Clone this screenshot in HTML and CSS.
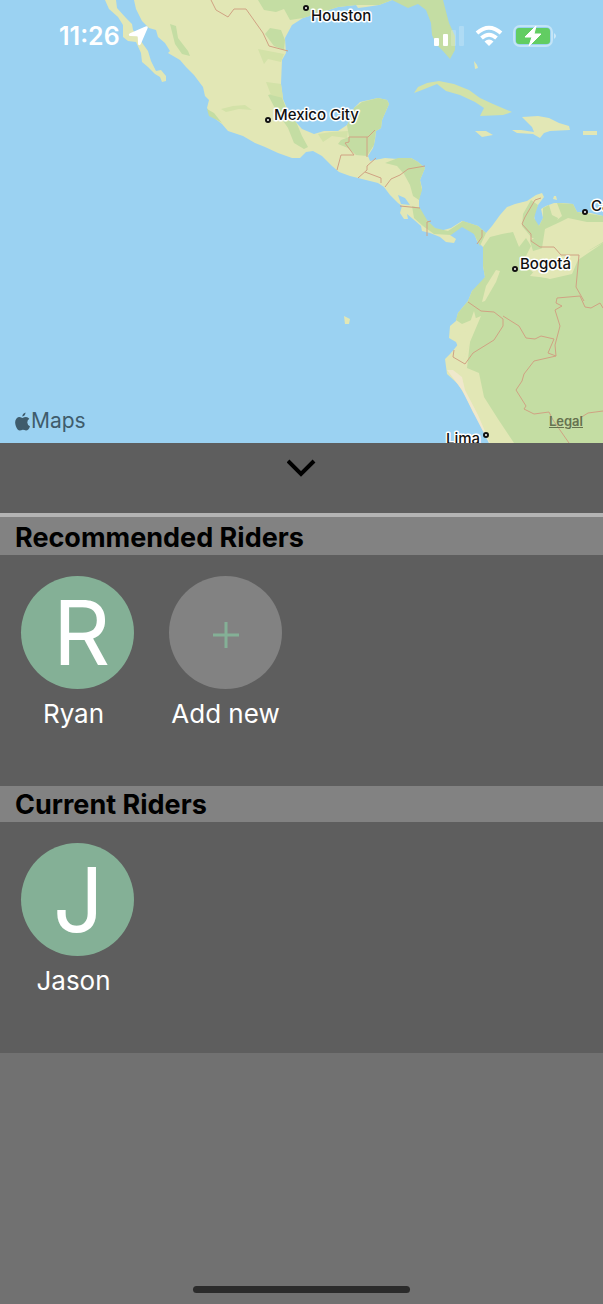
FILE: index.html
```html
<!DOCTYPE html>
<html lang="en">

<head>
    <meta charset="UTF-8">
    <meta name="viewport" content="width=device-width, initial-scale=1.0">
    <title>Riders</title>
    <link rel="stylesheet" href="styles.css">
</head>

<body>
    <section class="map">
        <svg class="map-canvas" viewBox="0 0 603 443" role="img" aria-label="Map of Central America">
            <rect class="sea" width="603" height="443"/>

            <!-- Baja California -->
            <path class="dry" d="M105 0 L109 9 L118 17 L123 25 L123 37 L128 41 L136 42 L141 53 L142 62 L148 67 L155 74 L160 77 L162 82 L166 81 L166 76 L161 70 L156 71 L151 61 L148 51 L138 37 L133 30 L132 24 L126 18 L117 8 L116 0 Z"/>

            <!-- Mainland -->
            <path class="dry" d="M134 0 L136 9 L142 21 L149 28 L156 30 L158 37 L165 43 L170 51 L168 53 L180 60 L186 67 L194 75 L203 87 L205 96 L209 100 L207 108 L213 117 L222 124 L228 131 L243 136 L255 143 L265 147 L278 153 L292 158 L300 158 L306 152 L313 151 L322 156 L332 166 L339 172 L350 176 L358 178 L370 181 L378 183 L384 187 L390 195 L398 203 L402 206 L400 213 L404 219 L408 219 L407 214 L413 219 L421 226 L422 231 L430 233 L440 237 L446 242 L454 243 L456 239 L450 235 L455 229 L461 226 L468 227 L474 233 L477 241 L483 247 L483 266 L485 277 L480 285 L472 291 L468 301 L458 313 L456 321 L450 326 L449 338 L456 342 L458 347 L451 353 L445 359 L447 374 L458 384 L466 397 L473 412 L482 426 L489 443 L603 443 L603 216 L591 213 L577 212 L573 204 L563 203 L554 203 L546 206 L541 209 L543 218 L539 226 L535 223 L534 214 L538 205 L544 197 L542 193 L536 195 L527 201 L515 204 L507 207 L500 215 L492 226 L486 233 L478 226 L462 221 L451 228 L440 231 L431 226 L424 217 L419 208 L419 199 L422 188 L420 180 L425 168 L418 162 L411 158 L398 159 L385 158 L370 161 L368 156 L373 148 L375 140 L376 131 L381 128 L382 120 L389 104 L387 100 L378 98 L360 102 L354 108 L351 118 L347 125 L338 131 L324 131 L314 134 L302 129 L295 121 L288 111 L283 99 L281 84 L282 60 L286 53 L285 38 L292 25 L303 18 L316 14 L338 7 L356 5 L358 8 L366 7 L379 5 L392 0 Z"/>
            <path class="green" d="M354 108 L362 102 L378 98 L387 100 L389 104 L382 120 L381 128 L376 131 L374 145 L367 156 L356 155 L348 148 L338 144 L341 140 L349 137 L347 125 L351 118 Z"/>
            <path class="green" d="M258 0 L264 10 L276 12 L284 9 L290 20 L303 18 L316 14 L338 7 L356 5 L379 5 L392 0 Z"/>
            <path class="green" d="M270 28 L281 30 L285 40 L284 50 L274 46 L265 34 Z"/>
            <path class="soft-green" d="M258 49 L284 54 L281 62 L268 59 L264 64 Z"/>
            <path class="green" d="M268 95 L280 92 L286 108 L297 124 L302 136 L308 147 L304 149 L294 143 L288 128 L277 112 Z"/>
            <path class="soft-green" d="M266 82 L281 84 L283 98 L271 95 Z"/>
            <path class="green" d="M170 24 L176 26 L178 38 L188 51 L190 56 L182 54 L175 44 Z"/>
            <path class="green" d="M207 109 L214 113 L222 123 L217 120 L209 116 Z"/>
            <path class="soft-green" d="M221 109 L233 106 L245 105 L252 110 L239 109 L226 112 Z"/>
            <path class="soft-green" d="M318 134 L331 132 L348 131 L347 138 L332 136 L323 142 Z"/>
            <path class="green" d="M385 163 L398 158 L411 158 L418 162 L425 168 L420 180 L422 190 L419 200 L413 196 L410 185 L404 174 L397 166 Z"/>
            <path class="green" d="M412 206 L420 208 L427 220 L435 228 L448 231 L463 221 L478 226 L486 233 L480 246 L474 234 L462 227 L451 235 L434 234 L423 226 L414 218 Z"/>

            <!-- South America forests -->
            <path class="green" d="M483 247 L490 237 L502 234 L513 232 L519 247 L526 238 L531 246 L522 264 L538 276 L550 279 L572 274 L578 260 L603 243 L603 443 L514 443 L498 419 L484 397 L479 373 L467 368 L470 342 L481 316 L462 324 L456 320 L458 313 L468 301 L472 291 L485 277 L483 266 Z"/>
            <path class="green" d="M538 205 L531 200 L523 214 L522 226 L532 238 L543 238 L555 229 L558 218 L552 215 L549 205 L543 208 L543 218 L539 226 L534 218 Z"/>
            <path class="green" d="M557 203 L573 204 L577 212 L603 216 L603 243 L590 250 L573 254 L553 245 L533 251 L530 241 L544 231 L562 216 Z"/>
            <path class="dry" d="M545 229 L560 222 L568 218 L587 222 L603 222 L603 242 L588 251 L577 256 L572 273 L548 278 L530 276 L540 264 L542 248 Z"/>
            <path class="dry" d="M496 270 L500 271 L496 282 L485 301 L482 302 L486 286 Z"/>
            <path class="dry" d="M474 311 L476 319 L472 330 L469 345 L463 360 L451 353 L460 342 L458 335 L467 331 Z"/>
            <path class="sand" d="M447 370 L453 370 L462 377 L465 390 L478 415 L490 443 L489 443 L473 412 L462 390 Z"/>

            <!-- Islands -->
            <path class="green" d="M392 0 L400 4 L408 8 L418 4 L426 10 L431 23 L432 35 L436 44 L443 51 L450 59 L455 50 L455 36 L449 23 L443 0 Z"/>
            <path class="soft-green" d="M414 93 L418 87 L427 83 L439 81 L454 84 L469 90 L480 98 L493 104 L512 112 L503 115 L480 116 L484 108 L475 102 L460 95 L446 91 L437 84 L422 90 Z"/>
            <path class="dry" d="M475 131 L486 131 L493 135 L482 137 Z M512 130 L521 130 L534 132 L532 127 L522 117 L538 116 L549 118 L559 123 L569 126 L570 130 L550 131 L544 133 L540 138 L533 134 L517 133 Z M583 131 H597 V135 H583 Z M474 61 L477 65 L478 68 L475 69 Z M554 196 L556 196 L557 200 L553 199 Z M344 316 L350 319 L349 324 L345 324 Z"/>
            <path class="sea" d="M398 195 L405 198 L410 205 L401 204 Z"/>

            <!-- Borders -->
            <path class="border" d="M211 0 L216 10 L228 17 L234 9 L246 9 L263 33 L269 46 L288 51
                M337 170 L341 155 L354 155 L345 143 L349 142 V137 H368 L375 130 M367 137 V157
                M376 158 L367 166 V170 L358 178 M365 172 L381 178 V183
                M385 187 L391 179 L400 175 L408 169 L425 166
                M400 206 L420 208 M427 236 V222 L431 221
                M482 230 V237 L477 244
                M541 198 L535 200 L525 217 L522 224 L531 234 V241 L540 247 L554 247 L561 255 L579 255 L576 287 L584 301
                M468 302 L481 311 L494 312 L503 319 L503 326 L494 340 L473 353 L465 364 L453 357 L454 350
                M503 316 L519 326 L526 338 L535 339 L541 336 L554 339 L548 353 L556 356 L555 345 L560 326 L555 310 L562 306 L556 303 L557 298 L580 296 L585 307 L591 308 L600 303 L603 308
                M556 356 L534 361 L524 374 L522 381 L516 390 L526 406 L524 409 L534 414 L549 412 L553 420 L569 443 M580 418 L588 413 L603 411"/>

            <!-- Cities -->
            <g class="pin">
                <circle cx="306" cy="8" r="2"/>
                <circle cx="268" cy="120" r="2"/>
                <circle cx="585" cy="212" r="2"/>
                <circle cx="515" cy="269" r="2"/>
                <circle cx="486" cy="435" r="2"/>
            </g>
            <g class="city">
                <text x="311" y="21">Houston</text>
                <text x="274" y="120">Mexico City</text>
                <text x="591" y="211">Caracas</text>
                <text x="520" y="269">Bogotá</text>
                <text x="446" y="444">Lima</text>
            </g>
        </svg>

        <div class="status-bar">
            <div class="clock">
                <span>11:26</span>
                <svg width="20" height="20" viewBox="0 0 20 20" aria-hidden="true">
                    <path d="M17.500 0.500 Q20.500 -0.500 19.500 2.500 L12.800 18 Q11 20.500 10 18 L9.800 11.500 Q9.800 10.200 8.500 10.200 L2 10 Q-0.500 9 2 7.200 Z" fill="#fff"/>
                </svg>
            </div>
            <div class="indicators">
                <svg width="32" height="22" viewBox="0 0 32 22" aria-hidden="true">
                    <g fill="#fff">
                        <rect x="1" y="13" width="5" height="8" rx="1"/>
                        <rect x="10" y="9" width="5" height="12" rx="1"/>
                        <rect x="18" y="5" width="5" height="16" rx="1" opacity=".2"/>
                        <rect x="26" y="1" width="5" height="20" rx="1" opacity=".2"/>
                    </g>
                </svg>
                <svg width="28" height="22" viewBox="0 0 28 22" aria-hidden="true">
                    <g fill="none" stroke="#fff" stroke-width="4">
                        <path d="M2 8 Q14 -2.500 26 8"/>
                        <path d="M6.500 13 Q14 6.500 21.500 13"/>
                    </g>
                    <path d="M9.500 16.500 Q14 12.500 18.500 16.500 L14 21 Z" fill="#fff"/>
                </svg>
                <svg width="44" height="22" viewBox="0 0 44 22" aria-hidden="true">
                    <rect x="1" y="1" width="38" height="20" rx="6" fill="none" stroke="#fff" stroke-width="2" opacity=".4"/>
                    <path d="M41 8 Q45 11 41 14 Z" fill="#fff" opacity=".5"/>
                    <rect x="3" y="3" width="34" height="16" rx="3" fill="#62cd62"/>
                    <path d="M23 1 L12 12 L19 12 L16 21 L28 9 L21 9 Z" fill="#fff" stroke="#fff"/>
                </svg>
            </div>
        </div>

        <div class="map-footer">
            <span class="brand">
                <svg width="15" height="19" viewBox="0 0 15 19" aria-hidden="true">
                    <path d="M10.500 0.500 Q10.500 4 7.300 4.500 Q7.300 1.500 10.500 0.500 Z M7.500 6 Q9 5 11 5 Q13 5 14.300 6.800 Q12.300 8 12.300 10.500 Q12.300 13 15 14.200 Q13.500 18.500 11 18.500 Q9.500 17.800 7.800 17.800 Q6 18.500 4.800 18.500 Q2.500 18.500 0.800 14 Q-0.800 9 1.500 6.500 Q3.500 4.500 5.500 5.300 Z" fill="#3f5c6c"/>
                </svg>
                Maps
            </span>
            <a class="legal" href="#legal">Legal</a>
        </div>
    </section>

    <main class="sheet">
        <button class="collapse" type="button" aria-label="Collapse">
            <svg width="30" height="18" viewBox="0 0 30 18" aria-hidden="true">
                <path d="M1 2 L14 15 L27 2" fill="none" stroke="#000" stroke-width="4"/>
            </svg>
        </button>

        <section class="group">
            <h2 class="first">Recommended Riders</h2>
            <div class="riders">
                <button class="rider" type="button">
                    <span class="avatar">R</span>
                    <span class="name">Ryan</span>
                </button>
                <button class="rider add" type="button">
                    <span class="avatar">
                        <svg width="26" height="26" viewBox="0 0 26 26" aria-hidden="true">
                            <path d="M13 0 V26 M0 13 H26" stroke="#84b096" stroke-width="3"/>
                        </svg>
                    </span>
                    <span class="name">Add new</span>
                </button>
            </div>
        </section>

        <section class="group">
            <h2>Current Riders</h2>
            <div class="riders">
                <button class="rider" type="button">
                    <span class="avatar">J</span>
                    <span class="name">Jason</span>
                </button>
            </div>
        </section>
    </main>

    <footer class="home">
        <div class="home-bar"></div>
    </footer>
</body>
</html>
```
FILE: styles.css
```css
* {
    box-sizing: border-box;
}

body {
    font-family: Inter, "Liberation Sans", sans-serif;
    margin: 0;
    min-height: 100vh;
    display: flex;
    flex-direction: column;
    background-color: #717171;
    color: white;
}

.map {
    position: relative;
    overflow: hidden;
}

.map-canvas {
    display: block;
    width: 100%;
    height: auto;
}

.sea {
    fill: #9bd2f2;
}

.dry {
    fill: #e2e7b5;
}

.green {
    fill: #c4dda3;
}

.soft-green {
    fill: #d3e2a8;
}

.sand {
    fill: #f0e8cc;
}

.border {
    fill: none;
    stroke: #d0a283;
    stroke-width: 1;
}

.pin {
    fill: white;
    stroke: #111;
    stroke-width: 2;
}

.city {
    font-size: 15px;
    font-weight: 500;
    fill: #111;
    stroke: white;
    stroke-width: 3px;
    stroke-linejoin: round;
    paint-order: stroke;
}

/* Status bar lies over the map */
.status-bar {
    position: absolute;
    top: 0;
    left: 0;
    right: 0;
    display: flex;
    justify-content: space-between;
    align-items: center;
    padding: 20px 46px 0 59px;
    height: 52px;
}

.clock {
    display: flex;
    align-items: center;
    gap: 8px;
    font-size: 25px;
    font-weight: 600;
}

.indicators {
    display: flex;
    align-items: center;
    gap: 10px;
}

.map-footer {
    position: absolute;
    bottom: 7px;
    left: 0;
    right: 0;
    display: flex;
    justify-content: space-between;
    align-items: center;
    padding: 0 20px 0 15px;
}

.brand {
    display: flex;
    align-items: center;
    gap: 1px;
    font-size: 21px;
    line-height: 30px;
    color: #3f5c6c;
}

.legal {
    font-size: 13px;
    font-weight: 600;
    color: #66724f;
}

.sheet {
    background-color: #5e5e5e;
}

button {
    font-family: inherit;
    color: inherit;
    background: none;
    border: none;
    padding: 0;
    cursor: pointer;
}

.collapse {
    display: flex;
    justify-content: center;
    width: 100%;
    height: 70px;
    padding-top: 16px;
}

.group h2 {
    margin: 0;
    padding: 2px 15px 0;
    font-size: 27px;
    font-weight: 700;
    line-height: 34px;
    color: black;
    background-color: #828282;
}

.group h2.first {
    padding-top: 4px;
    border-top: 4px solid #b4b4b4;
}

.riders {
    display: flex;
    gap: 35px;
    height: 231px;
    padding: 21px;
}

.rider {
    display: flex;
    flex-direction: column;
    align-items: center;
    width: 113px;
}

.avatar {
    display: flex;
    align-items: center;
    width: 113px;
    height: 113px;
    padding-left: 32px;
    border-radius: 50%;
    background-color: #84b096;
    font-size: 89px;
}

.name {
    margin-top: 8px;
    padding-right: 8px;
    font-size: 26px;
    line-height: 34px;
    white-space: nowrap;
}

.add .avatar {
    justify-content: center;
    padding: 5px 0 0;
    background-color: #828282;
}

.add .name {
    padding-right: 0;
}

.home {
    flex: 1;
    display: flex;
    align-items: flex-end;
    justify-content: center;
    padding-bottom: 11px;
}

.home-bar {
    width: 36%;
    height: 7px;
    border-radius: 4px;
    background-color: #2b2b2b;
}
```
